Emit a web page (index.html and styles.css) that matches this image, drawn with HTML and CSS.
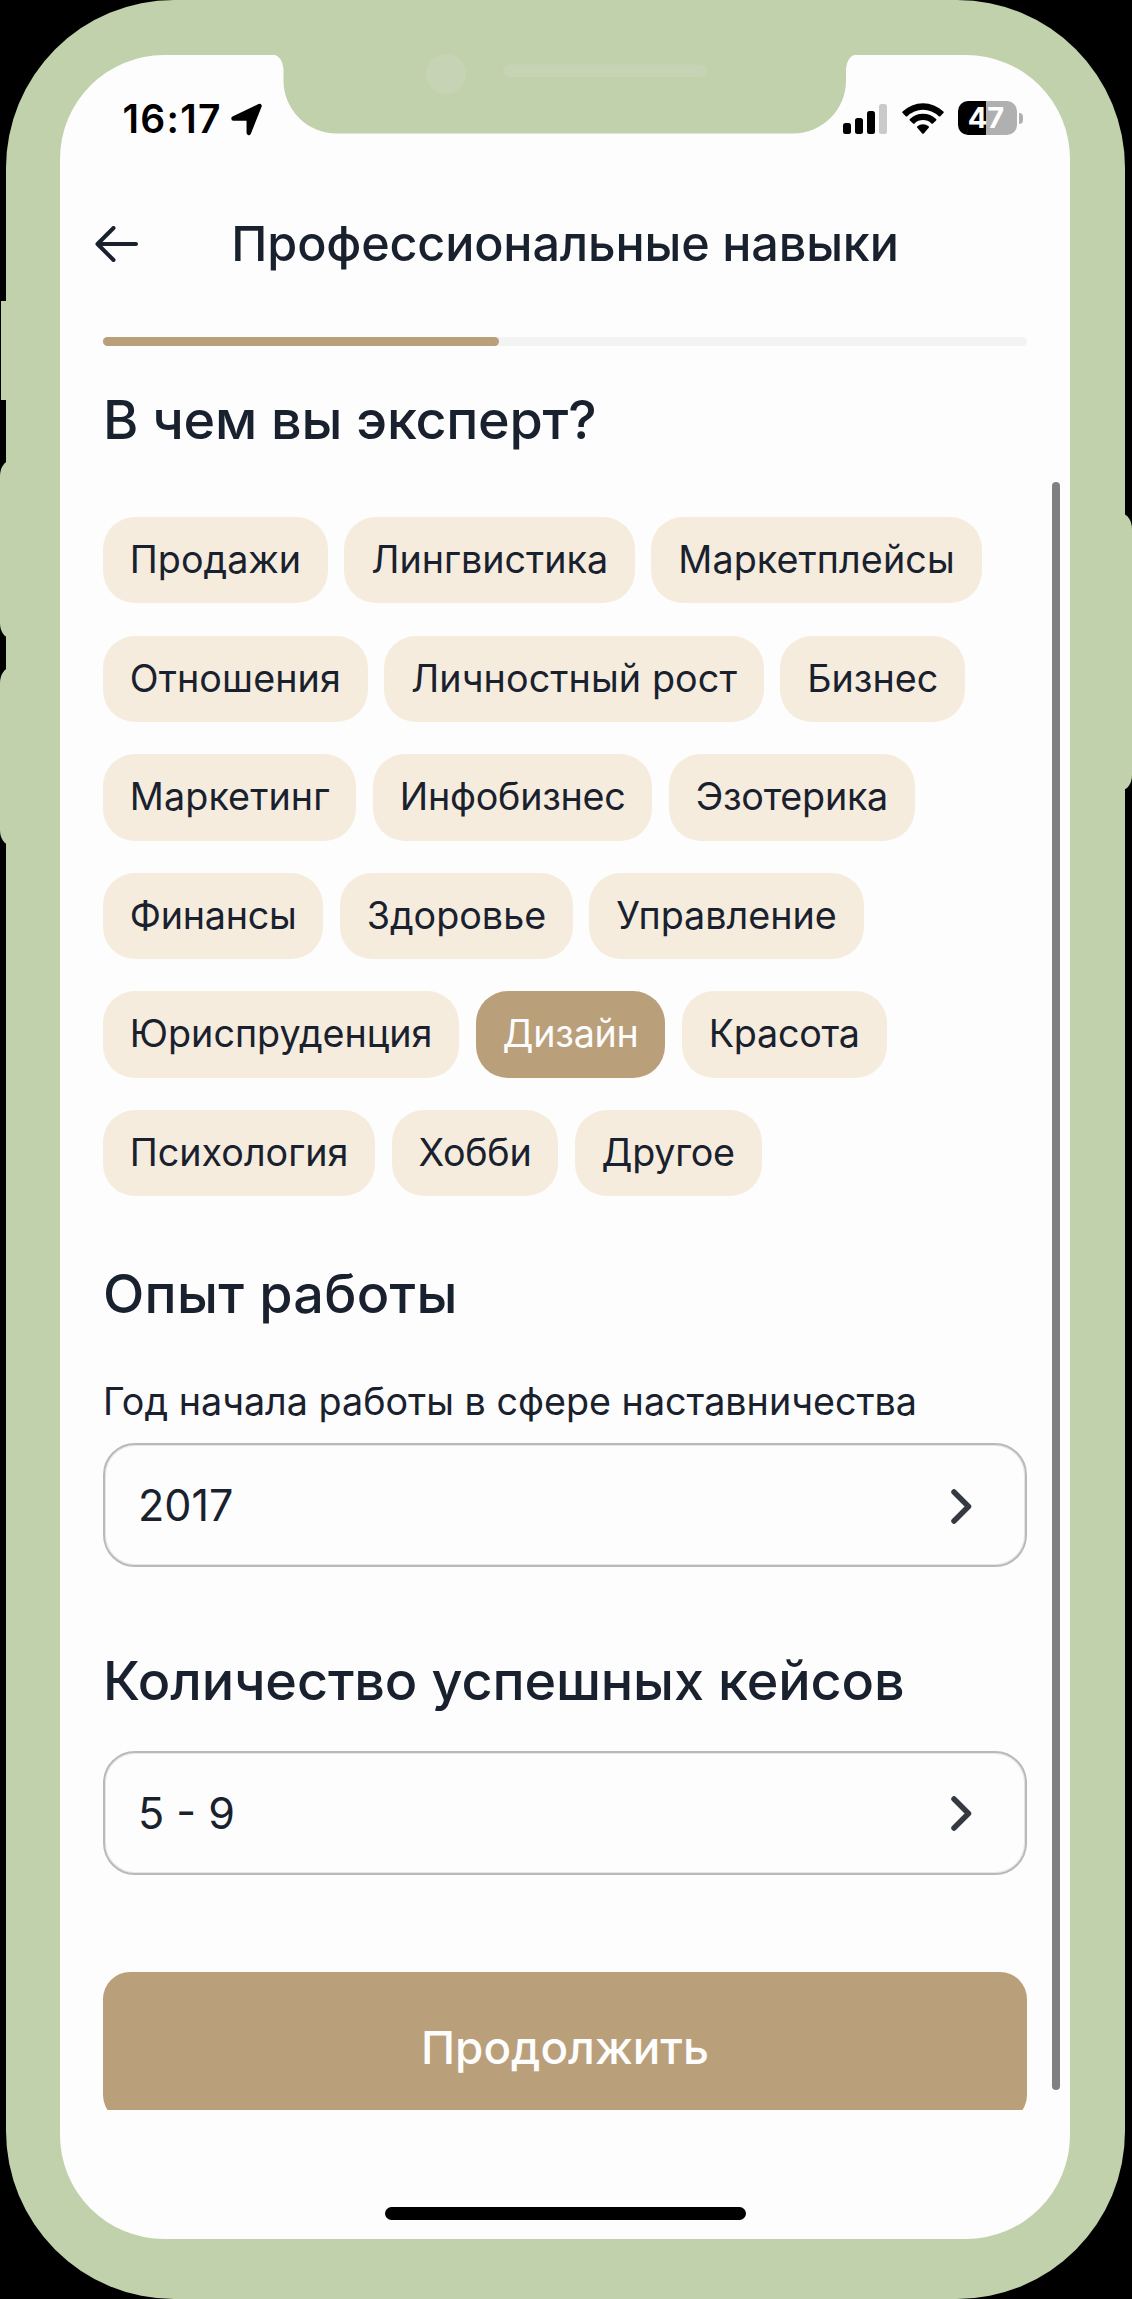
FILE: index.html
```html
<!DOCTYPE html>
<html lang="ru">
<head>
<meta charset="utf-8">
<title>Профессиональные навыки</title>
<link rel="stylesheet" href="styles.css">
</head>
<body>
<div class="phone">
  <span class="side-button side-mute"></span>
  <span class="side-button side-volume-up"></span>
  <span class="side-button side-volume-down"></span>
  <span class="side-button side-power"></span>

  <div class="screen">
    <svg class="notch" viewBox="0 0 590 80" aria-hidden="true">
      <path class="notch-body" d="M5 0H588Q579 2.500 578 15V26A53 53 0 0 1 525 79.500H69A53 53 0 0 1 15.500 26V15Q14.500 2.500 5 0Z"/>
      <circle class="notch-detail" cx="178" cy="20" r="20"/>
      <rect class="notch-detail" x="235" y="10.500" width="204" height="12.500" rx="6.250"/>
    </svg>

    <div class="status-bar">
      <div class="status-left">
        <span class="time">16:17</span>
        <svg class="location" viewBox="0 0 33 33"><path d="M3.500 15.500 29.500 3 18.800 29.800V16.700Q18.800 15.500 17.600 15.500Z"/></svg>
      </div>
      <div class="status-right">
        <svg class="signal" viewBox="0 0 44 30">
          <rect x="0" y="19" width="8" height="11" rx="2.500"/>
          <rect x="12" y="14" width="8" height="16" rx="2.500"/>
          <rect x="24" y="7" width="8" height="23" rx="2.500"/>
          <rect class="signal-off" x="36" y="0" width="8" height="30" rx="2.500"/>
        </svg>
        <svg class="wifi" viewBox="0 0 42 32">
          <path d="M.6 10.100Q-.2 9.300.6 8.500A29.500 29.500 0 0 1 41.400 8.500Q42.200 9.300 41.400 10.100L38.300 13.200Q37.500 14 36.700 13.200A22.500 22.500 0 0 0 5.300 13.200Q4.500 14 3.700 13.200Z"/>
          <path d="M7.900 17.400Q7.100 16.600 7.900 15.900A19.200 19.200 0 0 1 34.100 15.900Q34.900 16.600 34.100 17.400L31 20.400Q30.200 21.200 29.400 20.400A12.300 12.300 0 0 0 12.600 20.400Q11.800 21.200 11 20.400Z"/>
          <path d="M15.300 24.800Q14.500 24 15.400 23.200A8.700 8.700 0 0 1 26.600 23.200Q27.500 24 26.700 24.800L21.800 30.400Q21 31.200 20.200 30.400Z"/>
        </svg>
        <div class="battery"><span class="battery-level">47</span><span class="battery-cap"></span></div>
      </div>
    </div>

    <header class="header">
      <svg class="back" viewBox="0 0 43 36" aria-label="Назад"><path d="M41 18H2.500M18.500 2 2.500 18l16 16"/></svg>
      <h1 class="title">Профессиональные навыки</h1>
    </header>

    <div class="progress"><div class="progress-fill" style="width: 42.9%"></div></div>

    <main class="content">
      <h2 class="heading heading-expert">В чем вы эксперт?</h2>
      <div class="chips">
        <span class="chip">Продажи</span>
        <span class="chip">Лингвистика</span>
        <span class="chip chip-wide">Маркетплейсы</span>
        <span class="chip chip-wide">Отношения</span>
        <span class="chip chip-wide">Личностный рост</span>
        <span class="chip">Бизнес</span>
        <span class="chip chip-wide">Маркетинг</span>
        <span class="chip chip-tight">Инфобизнес</span>
        <span class="chip chip-tight">Эзотерика</span>
        <span class="chip chip-tight">Финансы</span>
        <span class="chip">Здоровье</span>
        <span class="chip">Управление</span>
        <span class="chip">Юриспруденция</span>
        <span class="chip chip-tight chip-selected">Дизайн</span>
        <span class="chip chip-tight">Красота</span>
        <span class="chip">Психология</span>
        <span class="chip chip-tight">Хобби</span>
        <span class="chip chip-tight">Другое</span>
      </div>

      <h2 class="heading heading-experience">Опыт работы</h2>
      <div class="label">Год начала работы в сфере наставничества</div>
      <div class="select select-year">
        <span>2017</span>
        <svg class="chevron" viewBox="0 0 21 35"><path d="M3 3 17.500 17.500 3 32"/></svg>
      </div>

      <h2 class="heading heading-cases">Количество успешных кейсов</h2>
      <div class="select select-cases">
        <span>5 - 9</span>
        <svg class="chevron" viewBox="0 0 21 35"><path d="M3 3 17.500 17.500 3 32"/></svg>
      </div>

      <button class="submit">Продолжить</button>
    </main>

    <span class="scrollbar"></span>
    <div class="home-indicator"></div>
  </div>
</div>
</body>
</html>
```
FILE: styles.css
```css
* {
  box-sizing: border-box;
}

body {
  margin: 0;
  background: #000;
  color: #1a212e;
  font-family: Inter, "Liberation Sans", sans-serif;
}

.phone {
  position: relative;
  height: 2299px;
  margin: 0 7px 0 6px;
  padding: 55px 55px 60px 54px;
  border-radius: 168px;
  background: #c0d1ac;
}

/* Hardware buttons on the edge of the case */
.side-button {
  position: absolute;
  width: 20px;
  background: #c0d1ac;
}

.side-mute {
  left: -5px;
  top: 301px;
  height: 99px;
}

.side-volume-up {
  left: -6px;
  top: 461px;
  height: 177px;
  border-radius: 12px / 18px;
}

.side-volume-down {
  left: -6px;
  top: 668px;
  height: 177px;
  border-radius: 12px / 18px;
}

.side-power {
  right: -7px;
  top: 514px;
  height: 276px;
  border-radius: 12px / 18px;
}

.screen {
  position: relative;
  display: flex;
  flex-direction: column;
  height: 2184px;
  border-radius: 104px;
  background: #fdfdfd;
}

.notch {
  position: absolute;
  left: 208px;
  top: -1px;
  width: 590px;
  height: 80px;
  overflow: visible;
}

.notch-body {
  fill: #c0d1ac;
}

.notch-detail {
  fill: #c6d4b5;
}

.status-bar {
  display: flex;
  justify-content: space-between;
  height: 128px;
  padding: 0 47px 0 62.500px;
}

.status-left,
.status-right {
  display: flex;
  align-items: center;
}

.status-left {
  gap: 8px;
}

.time {
  color: #000;
  font-size: 39px;
  font-weight: 600;
  line-height: 48px;
  letter-spacing: 1.3px;
}

.location {
  width: 33px;
  height: 33px;
  stroke: #000;
  stroke-width: 4.5;
  stroke-linejoin: round;
}

.signal {
  width: 44px;
  height: 30px;
  margin-right: 15px;
}

.signal-off {
  fill: #cacaca;
}

.wifi {
  width: 42px;
  height: 32px;
  margin-right: 14px;
}

.battery {
  display: flex;
  align-items: center;
  margin-top: -2px;
}

.battery-level {
  width: 59px;
  height: 34px;
  padding-right: 3px;
  border-radius: 10px;
  background: linear-gradient(90deg, #000 28px, #b0b0b0 28px);
  color: #fff;
  font-size: 29px;
  font-weight: 700;
  line-height: 34px;
  text-align: center;
}

.battery-cap {
  width: 4px;
  height: 11px;
  margin-left: 2px;
  border-radius: 0 4px 4px 0;
  background: #b0b0b0;
}

.header {
  display: grid;
  grid-template-columns: 43px 1fr 43px;
  align-items: center;
  height: 120px;
  padding: 2px 35px 0;
}

.back {
  width: 43px;
  height: 36px;
  fill: none;
  stroke: #1a212e;
  stroke-width: 4;
  stroke-linecap: round;
  stroke-linejoin: round;
}

.title {
  margin: 0;
  font-size: 48.5px;
  font-weight: 500;
  line-height: 64px;
  letter-spacing: -0.15px;
  text-align: center;
  white-space: nowrap;
}

.progress {
  height: 9px;
  margin: 34px 43px 0;
  border-radius: 5px;
  background: #f3f3f3;
}

.progress-fill {
  height: 9px;
  border-radius: 5px;
  background: #ba9f7b;
}

.content {
  height: 1764px;
  padding: 42px 43px 0;
  overflow: hidden;
}

.heading {
  margin: 0;
  font-size: 53.9px;
  font-weight: 500;
  line-height: 64px;
}

.heading-expert {
  letter-spacing: -0.25px;
}

.chips {
  display: flex;
  flex-wrap: wrap;
  gap: 32.2px 16.5px;
  margin-top: 65px;
}

.chip {
  height: 86.4px;
  padding: 0 26.8px;
  border-radius: 32px;
  background: #f5ecdd;
  font-size: 37.7px;
  line-height: 84px;
}

.chip-wide {
  letter-spacing: 0.1px;
}

.chip-tight {
  letter-spacing: -0.25px;
}

.chip-selected {
  background: #ba9f7b;
  color: #fdfdfd;
}

.heading-experience {
  margin-top: 66px;
  letter-spacing: 0.3px;
}

.label {
  margin-top: 51.500px;
  font-size: 37.7px;
  line-height: 46px;
}

.select {
  display: flex;
  align-items: center;
  justify-content: space-between;
  height: 124px;
  padding: 0 53px 0 33px;
  border: 2px solid #b9b9b9;
  border-radius: 32px;
  box-shadow: inset 0 0 0 1px #e6e6e6;
  font-size: 43.1px;
  line-height: 52px;
}

.select-year {
  margin-top: 19.500px;
}

.chevron {
  width: 21px;
  height: 35px;
  margin-top: 2px;
  fill: none;
  stroke: #343942;
  stroke-width: 5.5;
  stroke-linecap: round;
  stroke-linejoin: round;
}

.heading-cases {
  margin-top: 81.500px;
  letter-spacing: -0.12px;
}

.select-cases {
  margin-top: 38px;
}

.submit {
  display: block;
  width: 100%;
  height: 150px;
  margin-top: 97.500px;
  padding: 0;
  border: 0;
  border-radius: 27px;
  background: #ba9f7b;
  color: #fdfdfd;
  font-family: inherit;
  font-size: 45.8px;
  font-weight: 500;
}

.scrollbar {
  position: absolute;
  right: 10px;
  top: 427px;
  width: 8px;
  height: 1608px;
  border-radius: 4px;
  background: #808080;
}

.home-indicator {
  width: 361px;
  height: 13px;
  margin: 97px auto 0;
  border-radius: 7px;
  background: #000;
}
```
